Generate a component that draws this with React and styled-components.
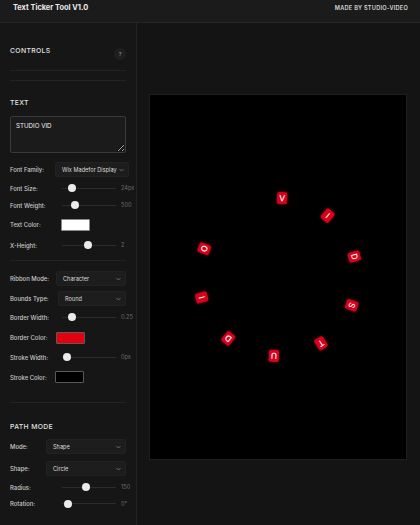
import React from "react";
import styled, { createGlobalStyle } from "styled-components";

const GlobalStyle = createGlobalStyle`
  html, body { margin: 0; padding: 0; background: #141414; }
  body { font-family: Inter, "Liberation Sans", sans-serif; color: #d6d6d6; }
  * { box-sizing: border-box; }
`;

const Page = styled.div`
  width: 420px;
  height: 525px;
  display: flex;
  flex-direction: column;
  overflow: hidden;
`;

const Header = styled.header`
  height: 23px;
  flex-shrink: 0;
  display: flex;
  justify-content: space-between;
  align-items: flex-start;
  padding: 4px 12px 0 13px;
  background: #1b1b1b;
  border-bottom: 1px solid #262626;
`;

const Title = styled.h1`
  margin: 0;
  font-size: 7.4px;
  line-height: 8px;
  font-weight: 700;
  color: #ececec;
`;

const Credit = styled.span`
  font-size: 5.6px;
  line-height: 8px;
  font-weight: 600;
  letter-spacing: 0.25px;
  color: #d8d8d8;
`;

const Body = styled.div`
  flex: 1;
  display: flex;
  min-height: 0;
`;

const Sidebar = styled.aside`
  width: 137px;
  flex-shrink: 0;
  padding: 0 10px;
  background: #161616;
  border-right: 1px solid #222;
`;

const ControlsHead = styled.div`
  height: 48px;
  display: flex;
  justify-content: space-between;
  align-items: flex-start;
  padding-top: 23px;
  margin: 0 0 9px;
  border-bottom: 1px solid #232323;
`;

const Heading = styled.h2`
  margin: 0;
  font-size: 6.8px;
  line-height: 9px;
  font-weight: 500;
  letter-spacing: 0.35px;
  color: #e2e2e2;
`;

const HelpButton = styled.button`
  margin-top: 2px;
  width: 12px;
  height: 12px;
  border-radius: 50%;
  border: none;
  padding: 0;
  background: #1f1f1f;
  color: #8a8a8a;
  font-family: inherit;
  font-size: 5px;
  font-weight: 600;
  display: grid;
  place-items: center;
`;

const Section = styled.section`
  border-top: 1px solid #232323;
  padding: ${(p) => p.$top}px 0 ${(p) => p.$bottom}px;
  display: flex;
  flex-direction: column;
`;

const SectionTitle = styled(Heading)`
  margin-bottom: ${(p) => p.$gap}px;
`;

const TextArea = styled.textarea`
  width: 116px;
  height: 37px;
  margin-bottom: 9px;
  padding: 5px 5px;
  background: #1b1b1b;
  border: 1px solid #393939;
  border-radius: 2px;
  color: #f0f0f0;
  font-family: inherit;
  font-size: 6.2px;
  font-weight: 400;
  line-height: 8px;
  outline: none;
  resize: both;
`;

const Row = styled.div`
  height: ${(p) => p.$h}px;
  margin-top: ${(p) => p.$mt || 0}px;
  display: flex;
  align-items: center;
`;

const Label = styled.label`
  width: ${(p) => p.$w}px;
  flex-shrink: 0;
  font-size: 5.9px;
  font-weight: 500;
  color: #c9c9c9;
  white-space: nowrap;
`;

const Select = styled.div`
  width: ${(p) => p.$w}px;
  height: 15px;
  flex-shrink: 0;
  display: flex;
  align-items: center;
  justify-content: space-between;
  padding: 0 4px 0 6px;
  background: #1d1d1d;
  border: 1px solid #222;
  border-radius: 2px;
  font-size: 5.6px;
  color: #dcdcdc;
  white-space: nowrap;
`;

const Chevron = () => (
  <svg width="5" height="4" viewBox="0 0 10 6" fill="none">
    <path d="M1 1l4 4 4-4" stroke="#8a8a8a" strokeWidth="1.4" />
  </svg>
);

const Track = styled.div`
  position: relative;
  width: 54px;
  height: 1px;
  margin-left: 52px;
  background: #2c2c2c;
  flex-shrink: 0;
`;

const Thumb = styled.span`
  position: absolute;
  top: -3.5px;
  width: 8px;
  height: 8px;
  border-radius: 50%;
  background: #ebebeb;
`;

const Value = styled.span`
  margin-left: 5px;
  font-size: 5.6px;
  color: #6b6b6b;
  white-space: nowrap;
`;

const Swatch = styled.div`
  width: 29px;
  height: 12px;
  flex-shrink: 0;
  background: ${(p) => p.$color};
  border: 1px solid ${(p) => p.$border};
  border-radius: 1px;
`;

const Main = styled.main`
  flex: 1;
  display: flex;
  align-items: center;
  justify-content: center;
  padding: 6px 2px 0 0;
  background: #141414;
`;

const Canvas = styled.div`
  position: relative;
  width: 258px;
  height: 366px;
  background: #000;
  border: 1px solid #1e1e1e;
`;

const Tile = styled.span`
  position: absolute;
  left: 50%;
  top: 50%;
  width: 10px;
  height: 12px;
  margin: -6px 0 0 -5px;
  display: grid;
  place-items: center;
  background: #d9001b;
  border-radius: 2px;
  box-shadow: 0 0 3px rgba(255, 20, 40, 0.55);
  color: #fff;
  font-size: 8.4px;
  font-weight: 500;
  line-height: 1;
`;

const Slider = ({ label, pct, value }) => (
  <>
    <Label $w={0}>{label}</Label>
    <Track>
      <Thumb style={{ left: `${pct * 46}px` }} />
    </Track>
    <Value>{value}</Value>
  </>
);

const TEXT = "STUDIO VID";
const RADIUS = 79;

export default function App() {
  return (
    <Page>
      <GlobalStyle />
      <Header>
        <Title>Text Ticker Tool V1.0</Title>
        <Credit>MADE BY STUDIO-VIDEO</Credit>
      </Header>
      <Body>
        <Sidebar>
          <ControlsHead>
            <Heading>CONTROLS</Heading>
            <HelpButton>?</HelpButton>
          </ControlsHead>

          <Section $top={17} $bottom={8}>
            <SectionTitle $gap={9}>TEXT</SectionTitle>
            <TextArea defaultValue="STUDIO VID" spellCheck={false} />
            <Row $h={15}>
              <Label $w={45}>Font Family:</Label>
              <Select $w={74}>
                Wix Madefor Display <Chevron />
              </Select>
            </Row>
            <Row $h={22}>
              <Slider label="Font Size:" pct={0.13} value="24px" />
            </Row>
            <Row $h={12}>
              <Slider label="Font Weight:" pct={0.2} value="500" />
            </Row>
            <Row $h={27}>
              <Label $w={51}>Text Color:</Label>
              <Swatch $color="#ffffff" $border="#8a8a8a" />
            </Row>
            <Row $h={14}>
              <Slider label="X-Height:" pct={0.48} value="2" />
            </Row>
          </Section>

          <Section $top={10} $bottom={15}>
            <Row $h={15}>
              <Label $w={46}>Ribbon Mode:</Label>
              <Select $w={70}>
                Character <Chevron />
              </Select>
            </Row>
            <Row $h={15} $mt={5}>
              <Label $w={48}>Bounds Type:</Label>
              <Select $w={68}>
                Round <Chevron />
              </Select>
            </Row>
            <Row $h={22}>
              <Slider label="Border Width:" pct={0.13} value="0.25" />
            </Row>
            <Row $h={19}>
              <Label $w={46}>Border Color:</Label>
              <Swatch $color="#e3000f" $border="#5a5a5a" />
            </Row>
            <Row $h={20}>
              <Slider label="Stroke Width:" pct={0.02} value="0px" />
            </Row>
            <Row $h={20}>
              <Label $w={45}>Stroke Color:</Label>
              <Swatch $color="#000000" $border="#5a5a5a" />
            </Row>
          </Section>

          <Section $top={19} $bottom={0}>
            <SectionTitle $gap={8}>PATH MODE</SectionTitle>
            <Row $h={15}>
              <Label $w={36}>Mode:</Label>
              <Select $w={80}>
                Shape <Chevron />
              </Select>
            </Row>
            <Row $h={15} $mt={7}>
              <Label $w={36}>Shape:</Label>
              <Select $w={80}>
                Circle <Chevron />
              </Select>
            </Row>
            <Row $h={22}>
              <Slider label="Radius:" pct={0.43} value="150" />
            </Row>
            <Row $h={11}>
              <Slider label="Rotation:" pct={0.04} value="0°" />
            </Row>
          </Section>
        </Sidebar>

        <Main>
          <Canvas>
            {TEXT.split("").map((ch, i) =>
              ch === " " ? null : (
                <Tile
                  key={i}
                  style={{
                    transform: `rotate(${111 + i * 36}deg) translateY(-${RADIUS}px)`,
                  }}
                >
                  {ch}
                </Tile>
              )
            )}
          </Canvas>
        </Main>
      </Body>
    </Page>
  );
}
